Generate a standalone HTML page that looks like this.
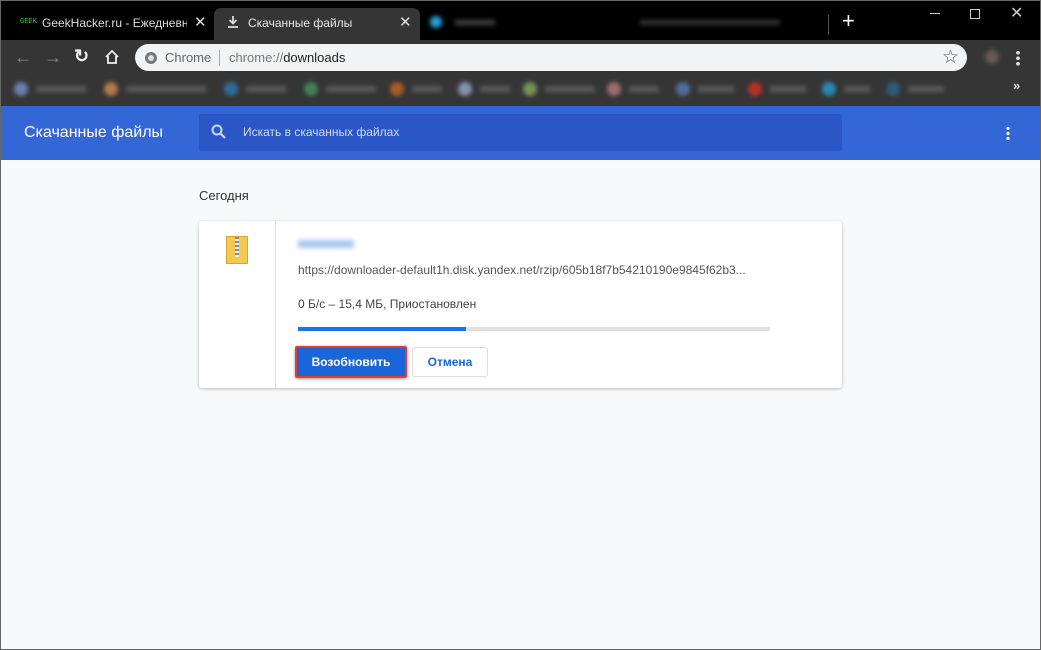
<html><head><style>
body{margin:0;width:1041px;height:650px;overflow:hidden;background:#f8f9fa;font-family:"Liberation Sans",Arial,sans-serif;position:relative}
div{position:absolute;box-sizing:border-box}
.blur{filter:blur(2.5px)}
.bi{position:absolute;top:82px;width:14px;height:14px;border-radius:7px;filter:blur(2px);opacity:.75}
.bt{position:absolute;top:86px;height:6px;background:#5a5a5a;filter:blur(2px)}
</style></head><body>
<div style="left:0;top:0;width:1041px;height:40px;background:#000"></div>
<div style="left:0;top:0;width:1041px;height:650px;border:1px solid #666;z-index:9;pointer-events:none"></div>
<div style="left:20px;top:18px;color:#3c3;font-size:7px;font-family:'Liberation Mono'">GEEK</div>
<div style="left:42px;top:16px;color:#ddd;font-size:12px;white-space:nowrap;width:145px;overflow:hidden">GeekHacker.ru - Ежедневный</div>
<div style="left:194px;top:13px;color:#ddd;font-size:15px">✕</div>
<div style="left:214px;top:8px;width:206px;height:33px;background:#353535;border-radius:7px 7px 0 0"></div>
<svg style="position:absolute;left:227px;top:16px" width="12" height="12"><path d="M6 0v7M2.5 4L6 7.5 9.5 4M1 11h10" stroke="#ddd" stroke-width="1.8" fill="none"/></svg>
<div style="left:248px;top:16px;color:#e8e8e8;font-size:12px">Скачанные файлы</div>
<div style="left:399px;top:13px;color:#ddd;font-size:15px">✕</div>
<div class="blur" style="left:430px;top:16px;width:12px;height:12px;border-radius:6px;background:#29a0d8"></div>
<div class="blur" style="left:455px;top:20px;width:40px;height:5px;background:#444"></div>
<div class="blur" style="left:640px;top:20px;width:140px;height:5px;background:#333"></div>
<div style="left:828px;top:15px;width:1px;height:20px;background:#555"></div>
<div style="left:842px;top:8px;color:#fff;font-size:22px">+</div>
<div style="left:930px;top:13px;width:10px;height:1px;background:#ccc"></div>
<div style="left:970px;top:9px;width:10px;height:10px;border:1px solid #ccc"></div>
<div style="left:1010px;top:3px;color:#ccc;font-size:16px">✕</div>
<div style="left:0;top:40px;width:1041px;height:66px;background:#353535"></div>
<div style="left:14px;top:47px;color:#888;font-size:18px">←</div>
<div style="left:44px;top:47px;color:#888;font-size:18px">→</div>
<div style="left:74px;top:46px;color:#eee;font-size:18px;font-weight:bold">↻</div>
<svg style="position:absolute;left:104px;top:49px" width="16" height="16"><path d="M2 8L8 2l6 6M4 7v7h8V7" stroke="#eee" stroke-width="1.8" fill="none"/></svg>
<div style="left:135px;top:44px;width:832px;height:27px;background:#f1f3f4;border-radius:14px"></div>
<div style="left:145px;top:52px;width:12px;height:12px;border-radius:6px;background:#777;border:3px solid #777"><div style="left:0;top:0;width:6px;height:6px;border-radius:3px;background:#ddd"></div></div>
<div style="left:165px;top:50px;color:#666;font-size:13px">Chrome</div>
<div style="left:219px;top:50px;width:1px;height:16px;background:#aaa"></div>
<div style="left:229px;top:50px;color:#777;font-size:13px">chrome://<span style="color:#222">downloads</span></div>
<div style="left:942px;top:46px;color:#555;font-size:19px">☆</div>
<div class="blur" style="left:985px;top:50px;width:14px;height:14px;border-radius:7px;background:#6a5a5a"></div>
<div style="left:1016px;top:50px;width:4px;height:16px;background:radial-gradient(circle,#ddd 1.8px,transparent 2px) 0 0/4px 5.5px"></div>
<div class="bi" style="left:14px;background:#7a9ad8"></div><div class="bt" style="left:36px;width:50px"></div>
<div class="bi" style="left:104px;background:#e09050"></div><div class="bt" style="left:126px;width:80px"></div>
<div class="bi" style="left:224px;background:#2a80c0"></div><div class="bt" style="left:246px;width:40px"></div>
<div class="bi" style="left:304px;background:#4a9a60"></div><div class="bt" style="left:326px;width:50px"></div>
<div class="bi" style="left:390px;background:#d06a20"></div><div class="bt" style="left:412px;width:30px"></div>
<div class="bi" style="left:458px;background:#a0b0d8"></div><div class="bt" style="left:480px;width:30px"></div>
<div class="bi" style="left:523px;background:#90b060"></div><div class="bt" style="left:545px;width:50px"></div>
<div class="bi" style="left:607px;background:#c08080"></div><div class="bt" style="left:629px;width:30px"></div>
<div class="bi" style="left:676px;background:#5a80c0"></div><div class="bt" style="left:698px;width:36px"></div>
<div class="bi" style="left:748px;background:#e03020"></div><div class="bt" style="left:770px;width:36px"></div>
<div class="bi" style="left:822px;background:#20a8e0"></div><div class="bt" style="left:844px;width:26px"></div>
<div class="bi" style="left:886px;background:#2a6a90"></div><div class="bt" style="left:908px;width:36px"></div>
<div style="left:1013px;top:78px;color:#ddd;font-size:13px;font-weight:bold">»</div>
<div style="left:0;top:106px;width:1041px;height:54px;background:#3367d6"></div>
<div style="left:24px;top:124px;color:#fff;font-size:16px">Скачанные файлы</div>
<div style="left:199px;top:114px;width:643px;height:37px;background:#2a56c6;border-radius:2px"></div>
<svg style="position:absolute;left:211px;top:124px" width="16" height="16"><circle cx="6" cy="6" r="4.5" stroke="#cfd8f0" stroke-width="2" fill="none"/><path d="M9.5 9.5L14 14" stroke="#cfd8f0" stroke-width="2"/></svg>
<div style="left:243px;top:125px;color:#d0dbf5;font-size:12px">Искать в скачанных файлах</div>
<div style="left:1006px;top:126px;width:4px;height:14px;background:radial-gradient(circle,#fff 1.6px,transparent 1.8px) 0 0/4px 5px"></div>
<div style="left:199px;top:188px;color:#333;font-size:13px">Сегодня</div>
<div style="left:199px;top:221px;width:643px;height:167px;background:#fff;border-radius:3px;box-shadow:0 1px 3px rgba(0,0,0,.25)"></div>
<div style="left:275px;top:221px;width:1px;height:167px;background:#e4e4e4"></div>
<div style="left:226px;top:236px;width:22px;height:28px;background:#f5c84f;border:1px solid #d9a530"></div>
<div style="left:235px;top:237px;width:4px;height:20px;background:repeating-linear-gradient(#888 0 2px,#eee 2px 4px)"></div>
<div class="blur" style="left:298px;top:240px;width:56px;height:8px;background:#aac6f2"></div>
<div style="left:298px;top:263px;color:#555;font-size:12px">https://downloader-default1h.disk.yandex.net/rzip/605b18f7b54210190e9845f62b3...</div>
<div style="left:298px;top:297px;color:#444;font-size:12px">0 Б/с – 15,4 МБ, Приостановлен</div>
<div style="left:298px;top:327px;width:472px;height:4px;background:#e0e0e0"></div>
<div style="left:298px;top:327px;width:168px;height:4px;background:#1a73e8"></div>
<div style="left:295px;top:346px;width:112px;height:32px;border:2px solid #e53935;border-radius:2px;box-shadow:0 1px 3px rgba(0,0,0,.4)"></div>
<div style="left:297px;top:348px;width:108px;height:28px;background:#1a66d9;color:#fff;font-size:12px;font-weight:bold;text-align:center;line-height:28px">Возобновить</div>
<div style="left:412px;top:347px;width:76px;height:30px;border:1px solid #ddd;border-radius:3px;color:#1a66d9;font-size:12px;font-weight:bold;text-align:center;line-height:28px">Отмена</div>
</body></html>
